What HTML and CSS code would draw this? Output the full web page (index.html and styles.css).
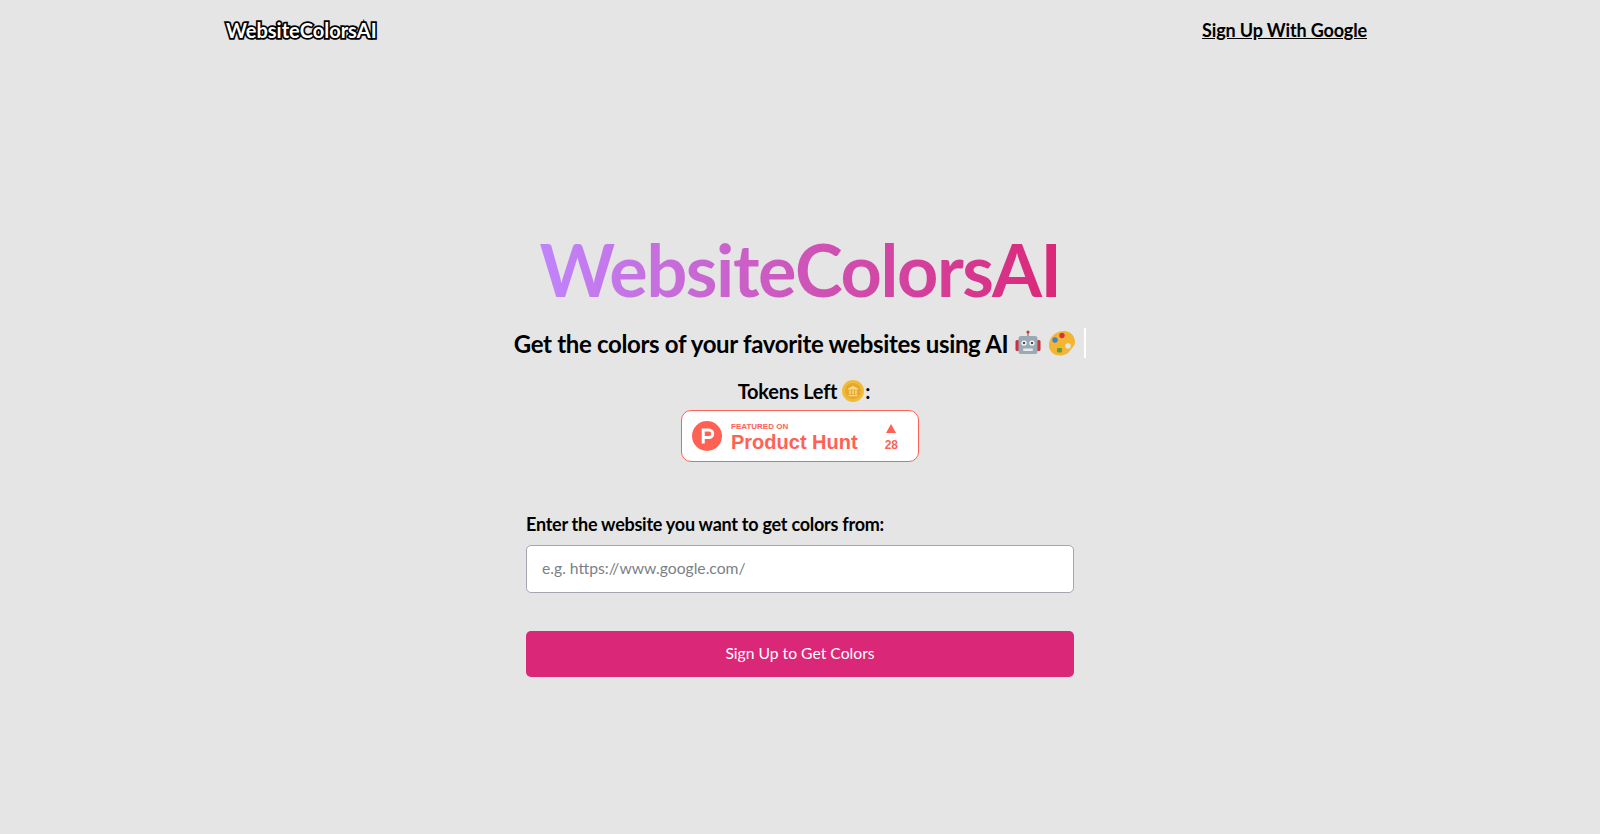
FILE: index.html
```html
<!DOCTYPE html>
<html lang="en">
<head>
    <meta charset="UTF-8">
    <meta name="viewport" content="width=device-width, initial-scale=1.0">
    <title>WebsiteColorsAI</title>
    <link rel="stylesheet" href="styles.css">
</head>
<body>
    <div class="nav">
        <a class="logo" href="#">WebsiteColorsAI</a>
        <a class="signup-link" href="#">Sign Up With Google</a>
    </div>

    <div class="main">
        <h1 class="title">WebsiteColorsAI</h1>
        <div class="subtitle">
            <span>Get the colors of your favorite websites using AI</span>
            <svg class="emoji" viewBox="0 0 28 28" aria-hidden="true">
                <rect x="13.3" y="3.5" width="1.4" height="4" fill="#7b8b94"/>
                <circle cx="14" cy="3" r="1.6" fill="#d5333f"/>
                <rect x="1.5" y="11" width="4" height="11" rx="1.5" fill="#c8313d"/>
                <rect x="22.5" y="11" width="4" height="11" rx="1.5" fill="#c8313d"/>
                <rect x="4.5" y="7" width="19" height="18" rx="2.5" fill="#9aaab4"/>
                <circle cx="10" cy="14" r="2.6" fill="#fff"/>
                <circle cx="18" cy="14" r="2.6" fill="#fff"/>
                <circle cx="10" cy="14" r="1.3" fill="#47545c"/>
                <circle cx="18" cy="14" r="1.3" fill="#47545c"/>
                <rect x="9" y="19.5" width="10" height="2.6" rx="1" fill="#e4e9ec"/>
            </svg>
            <svg class="emoji" viewBox="0 0 28 28" aria-hidden="true">
                <path d="M16 2C8 2 1 8 1 16c0 6 4.500 10.500 10.500 10.500 6 0 9-2.500 11-5.500 1.500-2.300 4.500-4.500 4.500-8C27 6.500 22 2 16 2z" fill="#f2b632"/>
                <circle cx="14" cy="6.500" r="2.700" fill="#d5333f"/>
                <circle cx="7" cy="11" r="2.700" fill="#3b82d6"/>
                <rect x="9" y="19" width="5" height="4.500" rx="1" fill="#6a9a3c"/>
                <circle cx="20" cy="17" r="2.800" fill="#e4e4e4"/>
            </svg>
            <span class="cursor"></span>
        </div>
        <div class="tokens">
            <span>Tokens Left</span>
            <svg class="coin" viewBox="0 0 22 22" aria-hidden="true">
                <circle cx="11" cy="11" r="11" fill="#f1bb3a"/>
                <circle cx="11" cy="11" r="8" fill="#e6a92c"/>
                <path d="M6 8.500 11 6l5 2.500v1H6zM6.500 15h9v1.200h-9zM7.300 10.300h1.500v4H7.300zM10.250 10.300h1.500v4h-1.500zM13.200 10.300h1.500v4h-1.500z" fill="#f8dc8c"/>
            </svg>
            <span class="colon">:</span>
        </div>
        <a class="ph-badge" href="#">
            <svg class="ph-logo" viewBox="0 0 30 30" aria-hidden="true">
                <circle cx="15" cy="15" r="15" fill="#ff6154"/>
                <path d="M17 15h-4.250V10.500H17a2.250 2.250 0 0 1 0 4.500zM17 7.500h-7.250v15h3v-4.500H17a5.250 5.250 0 0 0 0-10.500z" fill="#fff"/>
            </svg>
            <div class="ph-text">
                <div class="ph-small">FEATURED ON</div>
                <div class="ph-big">Product Hunt</div>
            </div>
            <div class="ph-votes">
                <span class="ph-arrow"></span>
                <span class="ph-count">28</span>
            </div>
        </a>

        <div class="form">
            <label class="form-label" for="urlInput">Enter the website you want to get colors from:</label>
            <input class="url-input" id="urlInput" type="text" placeholder="e.g. https://www.google.com/">
            <button class="btn">Sign Up to Get Colors</button>
        </div>
    </div>
</body>
</html>
```

FILE: styles.css
```css
body { margin: 0; background: #e5e5e5; color: #000; font-family: Lato, "Open Sans", sans-serif; }
.nav { padding: 16px 233px 0 226px; display: flex; justify-content: space-between; align-items: center; height: 28px; }
.logo { font-size: 20px; font-weight: 700; color: #fff; text-decoration: none; -webkit-text-stroke: 3.500px #000; paint-order: stroke fill; }
.signup-link { font-size: 18px; font-weight: 700; letter-spacing: -0.15px; color: #000; text-decoration: underline; }
.main { display: flex; flex-direction: column; align-items: center; padding-top: 185px; }
.title { margin: 0; font-size: 72px; line-height: 80px; font-weight: 700; letter-spacing: -1.4px; background: linear-gradient(to right, #c084fc, #db2777); -webkit-background-clip: text; background-clip: text; color: transparent; }
.subtitle { display: flex; align-items: center; gap: 6px; margin-top: 18px; height: 32px; font-size: 24px; font-weight: 700; letter-spacing: -0.33px; }
.emoji { width: 28px; height: 28px; }
.cursor { width: 2px; height: 30px; background: #fff; margin-left: 2px; }
.tokens { display: flex; align-items: center; gap: 5px; margin: 18px 0 0 8px; height: 28px; font-size: 20px; font-weight: 700; letter-spacing: -0.2px; }
.colon { margin-left: -4px; }
.coin { width: 22px; height: 22px; }
.ph-badge { box-sizing: border-box; width: 238px; height: 52px; margin-top: 5px; padding: 3px 20px 0 10px; display: flex; align-items: center; background: #fff; border: 1px solid #ff6154; border-radius: 10px; color: #ff6154; text-decoration: none; font-family: "Liberation Sans", Arial, sans-serif; font-weight: 700; }
.ph-logo { width: 30px; height: 30px; margin-top: -3px; }
.ph-text { margin-left: 9px; flex: 1; }
.ph-small { font-size: 8px; line-height: 9px; }
.ph-big { font-size: 20px; line-height: 23px; }
.ph-votes { display: flex; flex-direction: column; align-items: center; gap: 6px; }
.ph-arrow { width: 0; height: 0; border-left: 5.500px solid transparent; border-right: 5.500px solid transparent; border-bottom: 9px solid #ff6154; }
.ph-count { font-size: 12px; line-height: 13px; }
.form { width: 548px; display: flex; flex-direction: column; margin-top: 49px; }
.form-label { font-size: 18px; line-height: 26px; font-weight: 700; letter-spacing: -0.25px; margin-bottom: 8px; }
.url-input { box-sizing: border-box; height: 48px; padding: 0 15px 2px; border: 1px solid #a5a7b0; border-radius: 5px; background: #fff; font-family: inherit; font-size: 15.700px; }
.url-input::placeholder { color: #7a7f87; }
.btn { height: 46px; margin-top: 38px; padding-bottom: 4px; border: none; border-radius: 5px; background: #db2777; color: #fff; font-family: inherit; font-size: 15.700px; cursor: pointer; }
```
